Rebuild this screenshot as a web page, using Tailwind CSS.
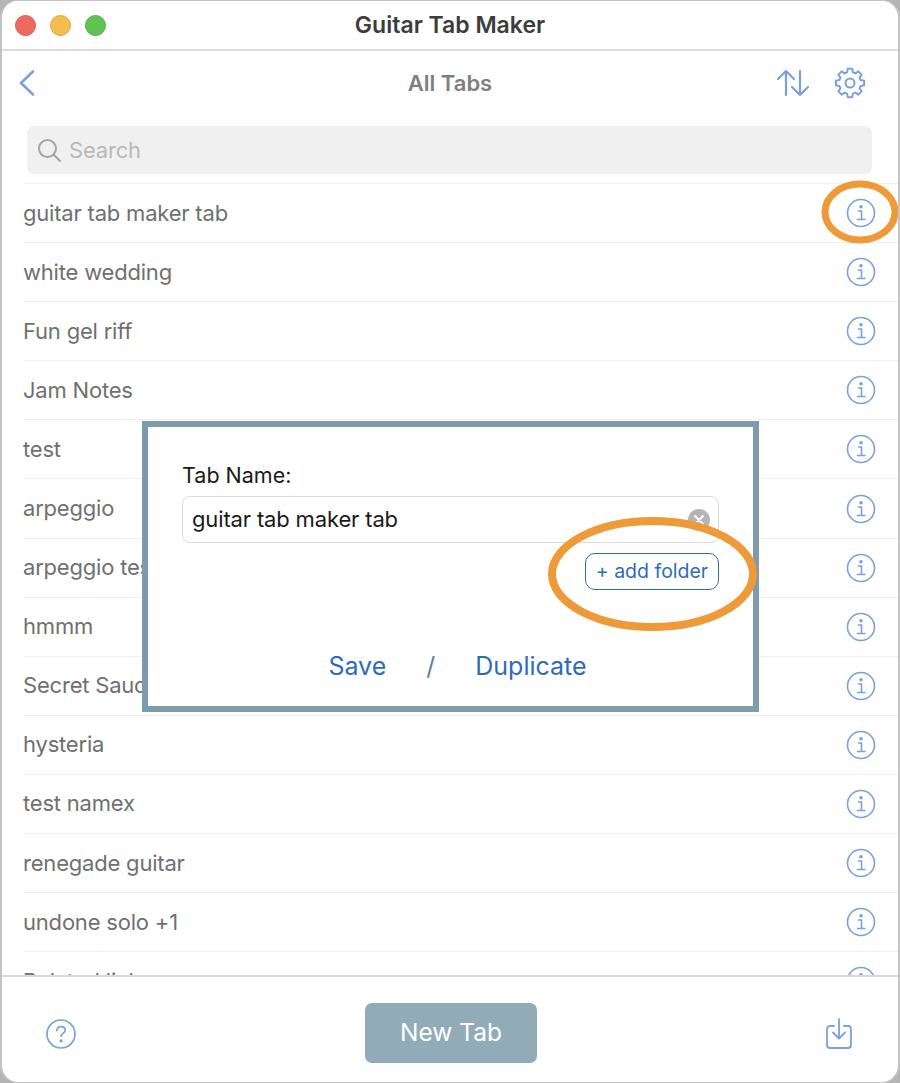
<!DOCTYPE html>
<html lang="en">
<head>
    <meta charset="UTF-8">
    <title>Guitar Tab Maker</title>
    <script src="https://cdn.jsdelivr.net/npm/@tailwindcss/browser@4"></script>
</head>
<body class="bg-[#b4b4b4] font-['Inter','Liberation_Sans',sans-serif]">
    <div class="relative w-[900px] h-[1083px] flex flex-col overflow-hidden rounded-[18px] bg-white border-l-2 border-r-2 border-t border-b border-[#c4c4c4]">

        <!-- title bar -->
        <header class="relative h-[50px] shrink-0 flex items-center justify-center border-b-2 border-[#dcdcdc] bg-white">
            <div class="absolute left-[13px] top-[14px] flex gap-[14px]">
                <span class="w-[21px] h-[21px] rounded-full bg-[#ee6a5f] border border-[#d05a50]"></span>
                <span class="w-[21px] h-[21px] rounded-full bg-[#f5bd4f] border border-[#d9a441]"></span>
                <span class="w-[21px] h-[21px] rounded-full bg-[#61c354] border border-[#52a847]"></span>
            </div>
            <h1 class="text-[23px] font-semibold text-[#3c3c3c]">Guitar Tab Maker</h1>
        </header>

        <!-- nav bar -->
        <nav class="relative h-[75px] shrink-0 flex items-center justify-center pb-[10px]">
            <svg class="absolute left-[16px] top-[18px] w-[18px] h-[28px]" viewBox="0 0 18 28" fill="none" stroke="#7ba1dc" stroke-width="2.6" stroke-linecap="round" stroke-linejoin="round"><path d="M15 2.5 3 14l12 11.5"/></svg>
            <span class="text-[22px] font-semibold text-[#7f7f7f]">All Tabs</span>
            <svg class="absolute left-[774px] top-[17px] w-[34px] h-[30px]" viewBox="0 0 34 30" fill="none" stroke="#7ba1dc" stroke-width="2.2" stroke-linecap="round" stroke-linejoin="round"><path d="M10 27V3M2 11l8-8 8 8M24 3v24M16 19l8 8 8-8"/></svg>
            <svg class="absolute left-[832px] top-[16px] w-[32px] h-[32px]" viewBox="0 0 24 24" fill="none" stroke="#7ba1dc" stroke-width="1.5" stroke-linecap="round" stroke-linejoin="round"><path d="M10.3 2.6h3.4l.5 2.6 1.9.8 2.2-1.5 2.4 2.4-1.5 2.2.8 1.9 2.6.5v3.4l-2.6.5-.8 1.9 1.5 2.2-2.4 2.4-2.2-1.5-1.9.8-.5 2.6h-3.4l-.5-2.6-1.9-.8-2.2 1.5-2.4-2.4 1.5-2.2-.8-1.9-2.6-.5v-3.4l2.6-.5.8-1.9-1.5-2.2 2.4-2.4 2.2 1.5 1.9-.8z" transform="translate(0 -1.2)"/><circle cx="12" cy="12" r="3.4"/></svg>
        </nav>

        <!-- search -->
        <div class="shrink-0 h-[57px] px-[25px]">
            <div class="h-[48px] w-[845px] flex items-center gap-[7px] pl-[10px] rounded-[7px] bg-[#f0f0f0]">
                <svg class="w-[25px] h-[25px]" viewBox="0 0 25 25" fill="none" stroke="#a5a5a5" stroke-width="2" stroke-linecap="round"><circle cx="10.5" cy="10.5" r="8.5"/><path d="m17 17 6 6"/></svg>
                <span class="text-[22px] tracking-[-0.2px] text-[#b9b9b9]">Search</span>
            </div>
        </div>

        <!-- tab list -->
        <ul id="tab-list" class="flex-1 min-h-0 overflow-hidden pl-[21px]"></ul>

        <!-- footer -->
        <footer class="relative h-[107px] shrink-0 flex items-center justify-center border-t-2 border-[#d8d8d8] pt-[6px] pl-[2px]">
            <svg class="absolute left-[43px] top-[41px] w-[32px] h-[32px]" viewBox="0 0 32 32" fill="none" stroke="#7ba1dc" stroke-width="1.7" stroke-linecap="round"><circle cx="16" cy="16" r="14"/><path d="M11.8 12.6c.2-2.6 2-4 4.3-4 2.4 0 4.1 1.5 4.1 3.6 0 3-4 3.4-4.1 6.2"/><circle cx="16" cy="22.8" r=".8" fill="#7ba1dc"/></svg>
            <button class="w-[172px] h-[60px] rounded-[7px] bg-[#92abb9] text-[24.5px] text-white">New Tab</button>
            <svg class="absolute left-[823px] top-[40px] w-[28px] h-[34px]" viewBox="0 0 28 34" fill="none" stroke="#7ba1dc" stroke-width="1.8" stroke-linecap="round" stroke-linejoin="round"><path d="M9 9H5a3 3 0 0 0-3 3v16a3 3 0 0 0 3 3h18a3 3 0 0 0 3-3V12a3 3 0 0 0-3-3h-4"/><path d="M14 2v19M8 15.5l6 6 6-6"/></svg>
        </footer>

        <!-- tab name dialog -->
        <div class="absolute left-[140px] top-[420px] w-[617px] h-[291px] bg-white border-[6px] border-[#7d9bad] px-[34px] pt-[34px]">
            <p class="text-[21.5px] leading-[28px] text-[#1a1a1a]">Tab Name:</p>
            <div class="relative mt-[7px] w-[537px] h-[47px] flex items-center pl-[9px] rounded-[8px] border border-[#dcdcdc] text-[22px] tracking-[-0.15px] text-[#1a1a1a]">
                guitar tab maker tab
                <span class="absolute right-[8px] top-[12px] w-[22px] h-[22px] flex items-center justify-center rounded-full bg-[#b5b5b5]">
                    <svg class="w-[10px] h-[10px]" viewBox="0 0 10 10" stroke="#ffffff" stroke-width="2" stroke-linecap="round"><path d="m1 1 8 8M9 1 1 9"/></svg>
                </span>
            </div>
            <div class="flex justify-end mt-[10px] w-[537px]">
                <button class="w-[134px] h-[37px] pt-[1px] rounded-[10px] border border-[#2f6cb8] text-[19.5px] text-[#2f6cb8]">+ add folder</button>
            </div>
            <div class="flex items-center justify-center gap-[40px] mt-[58px] w-[537px] pl-[14px] text-[25px] text-[#2f6cb8]">
                <span>Save</span>
                <span class="text-[#5f7f95]">/</span>
                <span>Duplicate</span>
            </div>
        </div>

        <!-- orange annotations -->
        <svg class="absolute left-0 top-0 pointer-events-none" width="900" height="1083" viewBox="0 0 900 1083" fill="none" stroke="#ee9a38">
            <ellipse cx="858" cy="211" rx="35" ry="28" stroke-width="7"/>
            <ellipse cx="650.500" cy="573" rx="100.500" ry="53" stroke-width="8"/>
        </svg>
    </div>

    <script>
        const tabs = ['guitar tab maker tab', 'white wedding', 'Fun gel riff', 'Jam Notes', 'test', 'arpeggio', 'arpeggio test', 'hmmm', 'Secret Sauce', 'hysteria', 'test namex', 'renegade guitar', 'undone solo +1', 'Belated lick'];
        const list = document.getElementById('tab-list');

        tabs.forEach(name => {
            const row = document.createElement('li');
            row.className = 'h-[59.1px] flex items-center justify-between pr-[22px] border-t border-[#f0f0f0] text-[22px] tracking-[-0.2px] text-[#707070]';
            row.innerHTML = `<span>${name}</span>
                <svg class="w-[30px] h-[30px]" viewBox="0 0 30 30" fill="none" stroke="#7ba1dc" stroke-width="1.6" stroke-linecap="round"><circle cx="15" cy="15" r="13.5"/><circle cx="15" cy="8.8" r="1" fill="#7ba1dc"/><path d="M12.5 13h3v8.5M11.5 21.5h7.5"/></svg>`;
            list.appendChild(row);
        });
    </script>
</body>
</html>
